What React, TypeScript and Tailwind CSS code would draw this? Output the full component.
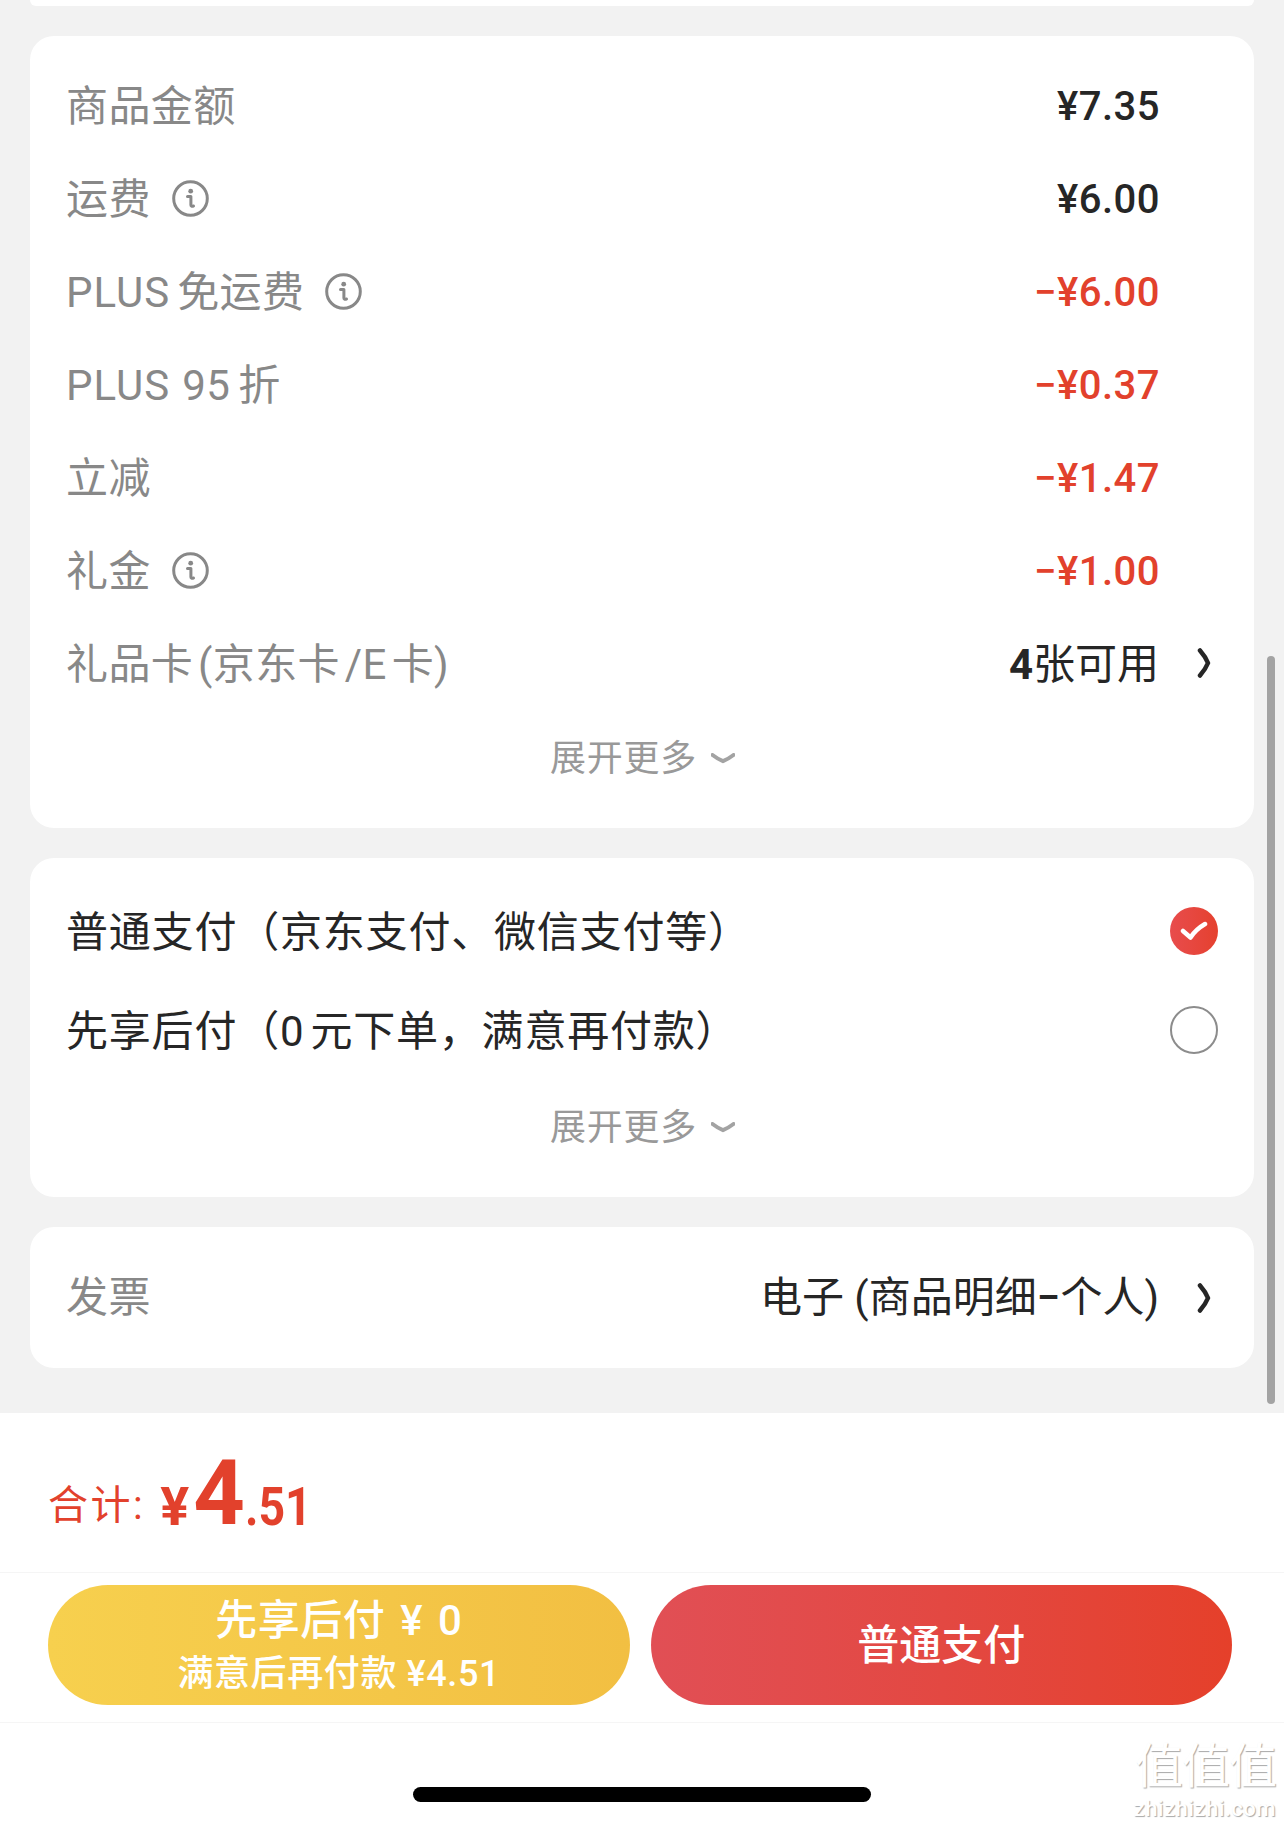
import React from 'react';

const InfoIcon = () => (
  <svg width="37" height="37" viewBox="0 0 37 37" fill="none" className="shrink-0">
    <circle cx="18.5" cy="18.5" r="16.8" stroke="#888888" strokeWidth="3" />
    <circle cx="18.7" cy="11.2" r="2.4" fill="#888888" />
    <path d="M15.5 16.400h3.400v8.600c0 1.200.8 1.600 2.600 1" stroke="#888888" strokeWidth="3" strokeLinecap="round" strokeLinejoin="round" />
  </svg>
);

const Chevron = () => (
  <svg width="14" height="30" viewBox="0 0 14 30" className="shrink-0 ml-[38px] mr-[7px]">
    <path d="M3 2.500c3.500 4 6.200 8 8 12.500-1.800 4.500-4.500 8.500-8 12.500" fill="none" stroke="#262626" strokeWidth="4.500" strokeLinecap="round" strokeLinejoin="round" />
  </svg>
);

const ShowMore = ({ className }: { className: string }) => (
  <div className={`flex items-center justify-center text-[36px] text-[#999999] ${className}`}>
    <span className="tracking-[0.8px]">展开更多</span>
    <svg width="24" height="12" viewBox="0 0 24 12" className="ml-[14px]">
      <path d="M1.500 2c4 3 7.500 5 10.500 6.200C15 7 18.500 5 22.500 2" fill="none" stroke="#a3a3a3" strokeWidth="4" strokeLinecap="round" />
    </svg>
  </div>
);

const Row = ({ label, value, red, info, chevron, amount }: { label: React.ReactNode; value: React.ReactNode; red?: boolean; info?: boolean; chevron?: boolean; amount?: boolean }) => (
  <div className="h-[93px] flex items-center justify-between">
    <div className="flex items-center text-[42px] text-[#888888] -ml-px">
      <span className="pt-[4px] tracking-[0.4px]">{label}</span>
      {info && <span className="ml-[21px] flex pt-[1px]"><InfoIcon /></span>}
    </div>
    {amount ? (
      <div className="flex items-center pt-[4px] mr-[58px] text-[40px] font-medium tracking-[0.5px] text-[#262626]">
        <span className={red ? 'text-[#e2412c]' : ''}>{value}</span>
      </div>
    ) : (
      <div className="flex items-center text-[42px] text-[#262626]">
        <span className="pt-[4px]">{value}</span>
        {chevron && <Chevron />}
      </div>
    )}
  </div>
);

const Plus = ({ gap }: { gap: string }) => <span className={`tracking-[1px] ${gap}`}>PLUS</span>;

export default function App() {
  return (
    <div className="relative w-[1284px] h-[1827px] overflow-hidden bg-white font-[Roboto,'Noto_Sans_CJK_SC',sans-serif] leading-none [text-spacing-trim:space-all]">
      <div className="h-[1413px] bg-[#f2f2f2] px-[30px]">
        <div className="h-[6px] bg-white rounded-b-[24px]"></div>

        <div className="mt-[30px] h-[792px] bg-white rounded-[24px] pl-[37px] pr-[36px] pt-[22px]">
          <Row label="商品金额" value="¥7.35" amount />
          <Row label="运费" value="¥6.00" info amount />
          <Row label={<><Plus gap="mr-[7px]" />免运费</>} value="−¥6.00" info red amount />
          <Row label={<><Plus gap="mr-[12px]" />95<span className="ml-[8px]">折</span></>} value="−¥0.37" red amount />
          <Row label="立减" value="−¥1.47" red amount />
          <Row label="礼金" value="−¥1.00" info red amount />
          <Row label={<span className="[word-spacing:-6px]">礼品卡 (京东卡 /E 卡)</span>} value={<><span className="font-bold">4</span>张可用</>} chevron />
          <ShowMore className="h-[93px] pt-[6px]" />
        </div>

        <div className="mt-[30px] h-[339px] bg-white rounded-[24px] pl-[37px] pr-[36px] pt-[24px]">
          <div className="h-[99px] flex items-center justify-between text-[42px] text-[#262626] -ml-px">
            <span className="pt-[2px] tracking-[0.8px]">普通支付（京东支付、微信支付等）</span>
            <span className="w-[48px] h-[48px] rounded-full bg-linear-to-r from-[#e84c4c] to-[#e5412e] flex items-center justify-center -mt-[2px]">
              <svg width="28" height="22" viewBox="0 0 28 22">
                <path d="M3 11l7.500 6.500C14 12 19 7.500 25 4" fill="none" stroke="#ffffff" strokeWidth="4.500" strokeLinecap="round" strokeLinejoin="round" />
              </svg>
            </span>
          </div>
          <div className="h-[99px] flex items-center justify-between text-[42px] text-[#262626] -ml-px">
            <span className="pt-[2px] tracking-[0.8px]">先享后付（0<span className="ml-[6px]">元下单，满意再付款）</span></span>
            <span className="w-[48px] h-[48px] rounded-full border-2 border-[#8c8c8c] -mt-[2px]"></span>
          </div>
          <ShowMore className="h-[92px] pt-[4px]" />
        </div>

        <div className="mt-[30px] h-[141px] bg-white rounded-[24px] pl-[37px] pr-[36px] flex items-center justify-between">
          <span className="text-[42px] text-[#888888] -ml-px tracking-[0.4px]">发票</span>
          <div className="flex items-center text-[42px] text-[#262626]">
            <span>电子 (商品明细<span className="font-medium">−</span>个人)</span>
            <Chevron />
          </div>
        </div>
      </div>

      <div className="h-[159px] pl-[48px] flex items-end pb-[49px] text-[#e2412c]">
        <span className="text-[40px] leading-none mb-[-3px] tracking-[2.500px]">合计:</span>
        <span className="ml-[15px] text-[54px] font-bold leading-[44px] mb-[-6px]">¥</span>
        <span className="ml-[4px] text-[90px] font-bold leading-[70px] mb-[-6px]">4</span>
        <span className="inline-block w-[66px] origin-left scale-x-[0.86] text-[54px] font-bold leading-[44px] mb-[-6px]">.51</span>
      </div>

      <div className="h-[151px] border-y border-[#f5f5f5] pl-[48px] pr-[52px] pt-[12px] flex gap-[21px]">
        <div className="w-[582px] h-[120px] rounded-full bg-linear-to-r from-[#f7d04e] to-[#f2bf42] text-white flex flex-col items-center justify-center pt-[4px]">
          <span className="text-[42px] font-medium leading-[46px] [word-spacing:4px] tracking-[0.5px]">先享后付 ¥ 0</span>
          <span className="text-[36px] font-medium leading-[44px] mt-[8px] tracking-[0.6px]">满意后再付款 ¥4.51</span>
        </div>
        <div className="w-[582px] h-[120px] rounded-full bg-linear-to-r from-[#e14f55] to-[#e5402a] text-white flex items-center justify-center text-[42px] font-medium pt-[2px]">
          普通支付
        </div>
      </div>

      <div className="flex justify-center pt-[64px]">
        <div className="w-[458px] h-[15px] rounded-full bg-black"></div>
      </div>

      <div className="absolute right-[8px] bottom-[6px] flex flex-col items-end gap-[5px] text-white [text-shadow:1px_1px_1px_#a8a8a8]">
        <span className="text-[48px] leading-[50px] tracking-[-1px]">值值值</span>
        <span className="text-[22px] leading-[24px] tracking-[0.5px] font-medium">zhizhizhi.com</span>
      </div>

      <div className="absolute left-[1267px] top-[656px] w-[8px] h-[748px] rounded-full bg-[#a3a3a3]"></div>
    </div>
  );
}
